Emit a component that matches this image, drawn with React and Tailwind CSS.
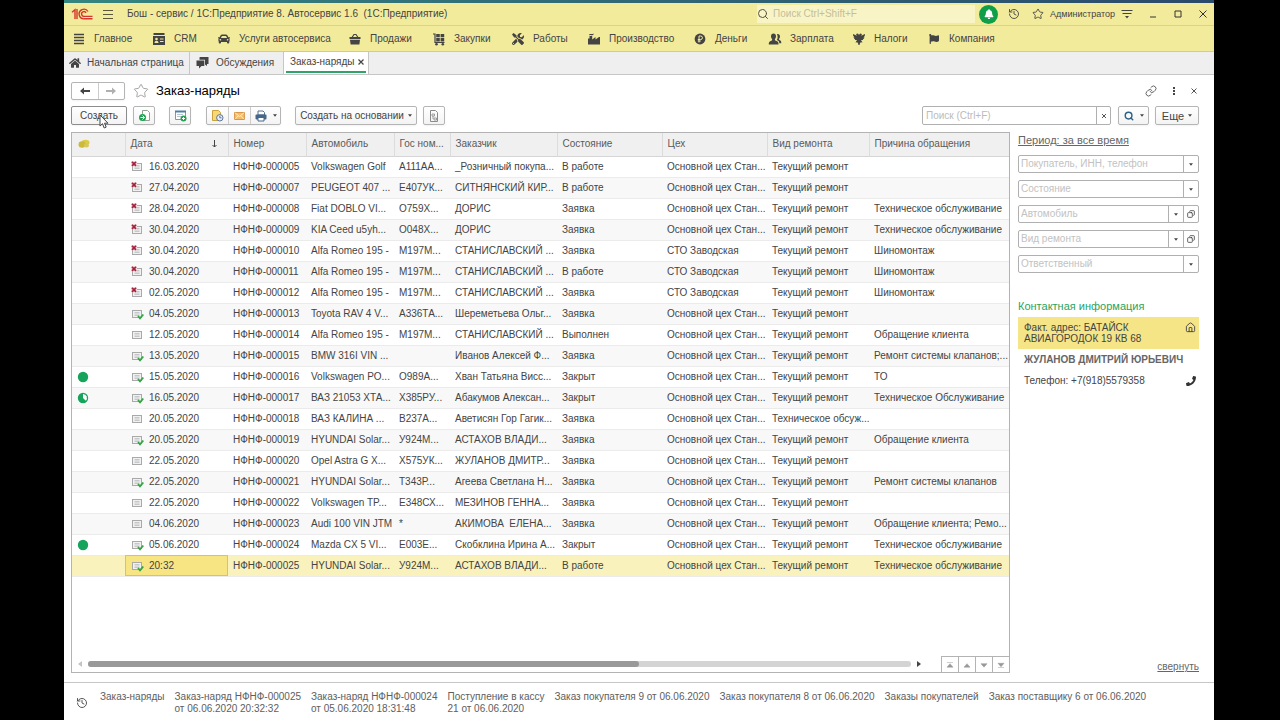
import {
  Copy,
  History,
  House,
  Link,
  Search,
  Star,
} from "lucide-react";
import { FaBell, FaCar, FaFlag, FaHome, FaPhone, FaTools } from "react-icons/fa";
import { clsx } from "clsx";

const glyph = "h-3.5 w-3.5 shrink-0";

function SectionsIcon() {
  return (
    <svg viewBox="0 0 14 14" className={glyph} stroke="currentColor" strokeWidth="1.4">
      <path d="M2 2.5h10M2 5.5h10M2 8.5h10M2 11.5h10" />
    </svg>
  );
}

function CrmIcon() {
  return (
    <svg viewBox="0 0 14 14" className={glyph} fill="currentColor">
      <path d="M1.5 1h11v2h-11zM1 4h12v9H1z" />
      <circle cx="4.5" cy="7" r="1.3" fill="#f3eb9c" />
      <path d="M2.5 11c0-3 4-3 4 0z" fill="#f3eb9c" />
      <path d="M8 7h3.5M8 9.5h3.5" stroke="#f3eb9c" strokeWidth="1.2" />
    </svg>
  );
}

function BasketIcon() {
  return (
    <svg viewBox="0 0 14 14" className={glyph} fill="currentColor">
      <path d="M4 5.5 6 2.5h2l2 3" fill="none" stroke="currentColor" strokeWidth="1.2" />
      <path d="M1.5 5h11v2h-11zM2 7.8h10l-.6 4.7H2.6z" />
    </svg>
  );
}

function TrolleyIcon() {
  return (
    <svg viewBox="0 0 14 14" className={glyph} fill="currentColor">
      <path d="M1 2h2v8.5h9.5" fill="none" stroke="currentColor" strokeWidth="1.2" />
      <path d="M4.2 2h3.6v3.3H4.2zM8.6 2h3.6v3.3H8.6zM4.2 6.1h3.6v3.3H4.2zM8.6 6.1h3.6v3.3H8.6z" />
      <circle cx="4.5" cy="12.2" r="1.3" />
      <circle cx="10.8" cy="12.2" r="1.3" />
    </svg>
  );
}

function FactoryIcon() {
  return (
    <svg viewBox="0 0 14 14" className={glyph} fill="currentColor">
      <path d="M1 12.5V6.5h1.5V4h2.7v3.4L8.5 5v2.4L12 5h1v7.5z" />
      <path d="M2 2.7C3 .8 4.5 3 6.5 1.5v1.2C5 4 3.5 2 2 3.4z" />
    </svg>
  );
}

function RubleIcon() {
  return (
    <svg viewBox="0 0 14 14" className={glyph}>
      <circle cx="7" cy="7" r="5.4" fill="currentColor" />
      <path d="M6 10.5V4h1.7a1.7 1.7 0 0 1 0 3.5H4.8M4.8 9h3" fill="none" stroke="#f3eb9c" />
    </svg>
  );
}

function PeopleIcon() {
  return (
    <svg viewBox="0 0 14 14" className={glyph} fill="currentColor">
      <path d="M5.5 1.5c1.6 0 2.5 1.1 2.5 2.8 0 1.2-.5 2.2-1.1 2.8v1.2l2.6 1.2c.8.4 1 1.3 1 3H.8c0-1.7.2-2.6 1-3l2.3-1.2V7.1C3.5 6.5 3 5.5 3 4.3 3 2.6 3.9 1.5 5.5 1.5z" />
      <path d="M9 2.2c1.7-.4 3 .6 3 2.3 0 1-.3 1.8-.9 2.3v1l1.3.8c.7.4.9 1.3.9 2.6h-2c-.1-1.5-.4-2.2-1.5-2.7l-1-.5c1-1.3 1.2-3.8.2-5.8z" />
    </svg>
  );
}

function EagleIcon() {
  return (
    <svg viewBox="0 0 14 14" className={glyph} fill="currentColor">
      <path d="M7 3 6 1.5 4 2l.8 1.7L1 2l.2 2 .8.3-.6.9 1 .5-.5 1 1.2.3-.3 1L5 8l-1.5 2.5 1.7-.3.8 1 .5 1.8h1l.5-1.8.8-1 1.7.3L9 8l2.2 0-.3-1 1.2-.3-.5-1 1-.5-.6-.9.8-.3L13 2 9.2 3.7 10 2 8 1.5z" />
    </svg>
  );
}

const sections = [
  { title: "Главное", icon: <SectionsIcon />, width: "w-[80px]" },
  { title: "CRM", icon: <CrmIcon />, width: "w-[65px]" },
  { title: "Услуги автосервиса", icon: <FaCar className="h-3.5 w-3.5 shrink-0 p-px" />, width: "w-[131px]" },
  { title: "Продажи", icon: <BasketIcon />, width: "w-[84px]" },
  { title: "Закупки", icon: <TrolleyIcon />, width: "w-[79px]" },
  { title: "Работы", icon: <FaTools className="h-3.5 w-3.5 shrink-0 p-px" />, width: "w-[76px]" },
  { title: "Производство", icon: <FactoryIcon />, width: "w-[106px]" },
  { title: "Деньги", icon: <RubleIcon />, width: "w-[75px]" },
  { title: "Зарплата", icon: <PeopleIcon />, width: "w-[84px]" },
  { title: "Налоги", icon: <EagleIcon />, width: "w-[75px]" },
  { title: "Компания", icon: <FaFlag className="h-3.5 w-3.5 shrink-0 p-0.5" />, width: "w-[80px]" },
];

const SHOP = "Основной цех Стан...";
const PLANT = "СТО Заводская";
const CURRENT = "Текущий ремонт";

// mark: deleted | posted | draft, paid: full | part
const orders = [
  { mark: "deleted", date: "16.03.2020", no: "000005", car: "Volkswagen Golf", plate: "А111АА...", client: "_Розничный покупа...", state: "В работе", shop: SHOP, kind: CURRENT, reason: "" },
  { mark: "deleted", date: "27.04.2020", no: "000007", car: "PEUGEOT 407 ...", plate: "Е407УК...", client: "СИТНЯНСКИЙ КИР...", state: "В работе", shop: SHOP, kind: CURRENT, reason: "" },
  { mark: "deleted", date: "28.04.2020", no: "000008", car: "Fiat DOBLO VI...", plate: "О759Х...", client: "ДОРИС", state: "Заявка", shop: SHOP, kind: CURRENT, reason: "Техническое обслуживание" },
  { mark: "deleted", date: "30.04.2020", no: "000009", car: "KIA Ceed u5yh...", plate: "О048Х...", client: "ДОРИС", state: "Заявка", shop: SHOP, kind: CURRENT, reason: "Техническое обслуживание" },
  { mark: "deleted", date: "30.04.2020", no: "000010", car: "Alfa Romeo 195 -", plate: "М197М...", client: "СТАНИСЛАВСКИЙ ...", state: "Заявка", shop: PLANT, kind: CURRENT, reason: "Шиномонтаж" },
  { mark: "deleted", date: "30.04.2020", no: "000011", car: "Alfa Romeo 195 -", plate: "М197М...", client: "СТАНИСЛАВСКИЙ ...", state: "В работе", shop: PLANT, kind: CURRENT, reason: "Шиномонтаж" },
  { mark: "deleted", date: "02.05.2020", no: "000012", car: "Alfa Romeo 195 -", plate: "М197М...", client: "СТАНИСЛАВСКИЙ ...", state: "Заявка", shop: PLANT, kind: CURRENT, reason: "Шиномонтаж" },
  { mark: "posted", date: "04.05.2020", no: "000013", car: "Toyota RAV 4 V...", plate: "А336ТА...", client: "Шереметьева Ольг...", state: "Заявка", shop: SHOP, kind: CURRENT, reason: "" },
  { mark: "draft", date: "12.05.2020", no: "000014", car: "Alfa Romeo 195 -", plate: "М197М...", client: "СТАНИСЛАВСКИЙ ...", state: "Выполнен", shop: SHOP, kind: CURRENT, reason: "Обращение клиента" },
  { mark: "posted", date: "13.05.2020", no: "000015", car: "BMW 316I VIN ...", plate: "", client: "Иванов Алексей Ф...", state: "Заявка", shop: SHOP, kind: CURRENT, reason: "Ремонт системы клапанов;..." },
  { paid: "full", mark: "posted", date: "15.05.2020", no: "000016", car: "Volkswagen PO...", plate: "О989А...", client: "Хван Татьяна Висс...", state: "Закрыт", shop: SHOP, kind: CURRENT, reason: "ТО" },
  { paid: "part", mark: "posted", date: "16.05.2020", no: "000017", car: "ВАЗ 21053 ХТА...", plate: "Х385РУ...", client: "Абакумов Алексан...", state: "Закрыт", shop: SHOP, kind: CURRENT, reason: "Техническое Обслуживание" },
  { mark: "draft", date: "20.05.2020", no: "000018", car: "ВАЗ КАЛИНА ...", plate: "В237А...", client: "Аветисян Гор Гагик...", state: "Заявка", shop: SHOP, kind: "Техническое обсуж...", reason: "" },
  { mark: "posted", date: "20.05.2020", no: "000019", car: "HYUNDAI Solar...", plate: "У924М...", client: "АСТАХОВ ВЛАДИ...", state: "Заявка", shop: SHOP, kind: CURRENT, reason: "Обращение клиента" },
  { mark: "draft", date: "22.05.2020", no: "000020", car: "Opel Astra G X...", plate: "Х575УК...", client: "ЖУЛАНОВ ДМИТР...", state: "Заявка", shop: SHOP, kind: CURRENT, reason: "" },
  { mark: "posted", date: "22.05.2020", no: "000021", car: "HYUNDAI Solar...", plate: "Т343Р...", client: "Агеева Светлана Н...", state: "Заявка", shop: SHOP, kind: CURRENT, reason: "Ремонт системы клапанов" },
  { mark: "draft", date: "22.05.2020", no: "000022", car: "Volkswagen TP...", plate: "Е348СХ...", client: "МЕЗИНОВ ГЕННА...", state: "Заявка", shop: SHOP, kind: CURRENT, reason: "" },
  { mark: "draft", date: "04.06.2020", no: "000023", car: "Audi 100 VIN JTM", plate: "*", client: "АКИМОВА  ЕЛЕНА...", state: "Заявка", shop: SHOP, kind: CURRENT, reason: "Обращение клиента; Ремо..." },
  { paid: "full", mark: "posted", date: "05.06.2020", no: "000024", car: "Mazda CX 5 VI...", plate: "Е003Е...", client: "Скобклина Ирина А...", state: "Закрыт", shop: SHOP, kind: CURRENT, reason: "Техническое обслуживание" },
  { selected: true, mark: "posted", date: "20:32", no: "000025", car: "HYUNDAI Solar...", plate: "У924М...", client: "АСТАХОВ ВЛАДИ...", state: "В работе", shop: SHOP, kind: CURRENT, reason: "Техническое обслуживание" },
];

const recent = [
  ["Заказ-наряды"],
  ["Заказ-наряд НФНФ-000025", "от 06.06.2020 20:32:32"],
  ["Заказ-наряд НФНФ-000024", "от 05.06.2020 18:31:48"],
  ["Поступление в кассу", "21 от 06.06.2020"],
  ["Заказ покупателя 9 от 06.06.2020"],
  ["Заказ покупателя 8 от 06.06.2020"],
  ["Заказы покупателей"],
  ["Заказ поставщику 6 от 06.06.2020"],
];

function Logo() {
  return (
    <svg viewBox="0 0 22 12" className="h-3 w-[22px] shrink-0" fill="none" stroke="#d5352b" strokeWidth="1.4">
      <path d="M1 4.2 4 1.8V11M6 11V1" />
      <path d="M17 3.5A4.8 4.8 0 1 0 13.5 10.8H21.5" />
      <path d="M15 4.8A2.4 2.4 0 1 0 13.5 8.4H21.5" />
    </svg>
  );
}

function Caret() {
  return (
    <svg viewBox="0 0 5 3" className="h-[3px] w-1 shrink-0" fill="#444">
      <path d="M0 0h5L2.5 3z" />
    </svg>
  );
}

function OrderMark({ mark }) {
  return (
    <svg viewBox="0 0 13 12" className="h-3 w-[13px] shrink-0" fill="none">
      <rect x="1.5" y="2.5" width="9" height="7" fill="#f1f1f1" stroke="#a9a9a9" />
      <path d="M3.5 4.5h5M3.5 6h5M3.5 7.5h5" stroke="#b9bec0" strokeWidth=".8" />
      {mark === "deleted" && (
        <>
          <path d="M0 0h6v5.5H0z" fill="#f6dfe2" />
          <path d="M1 .8 5 4.8M5 .8 1 4.8" stroke="#a3223f" strokeWidth="1.8" />
        </>
      )}
      {mark === "posted" && <path d="M7 8l2 2.3L12.3 6.5" stroke="#35a344" strokeWidth="1.8" />}
    </svg>
  );
}

function PaidMark({ paid }) {
  if (!paid) return null;
  return (
    <svg viewBox="0 0 12 12" className="h-3 w-3" role="img" aria-label="Оплата">
      <circle cx="6" cy="6" r="5.2" fill="#16a45c" />
      {paid === "part" && <path d="M6 6V2A4 4 0 0 1 8.8 8.8z" fill="#fff" />}
    </svg>
  );
}

function ToolButton({ className, children, ...rest }) {
  return (
    <button
      type="button"
      className={clsx(
        "flex h-[19px] shrink-0 items-center justify-center rounded-xs border bg-linear-to-b from-white to-[#f3f3f3] shadow-xs",
        className
      )}
      {...rest}
    >
      {children}
    </button>
  );
}

function TitleBar() {
  return (
    <div className="flex h-[23px] items-center border-b border-[#dcd38b] px-[7px]">
      <Logo />
      <button type="button" aria-label="Меню" className="ml-2.5">
        <svg viewBox="0 0 10 10" className="h-2.5 w-2.5" stroke="#5b573a">
          <path d="M0 1.5h10M0 5.5h10M0 9.5h10" />
        </svg>
      </button>
      <span className="ml-3.5 whitespace-pre">Бош - сервис / 1С:Предприятие 8. Автосервис 1.6  (1С:Предприятие)</span>
      <label className="ml-auto flex h-[18px] w-[218px] items-center gap-1 bg-[#f9f4c6]">
        <Search className="h-3 w-3 text-[#55523c]" />
        <input
          aria-label="Глобальный поиск"
          placeholder="Поиск Ctrl+Shift+F"
          className="min-w-0 flex-1 outline-none placeholder:text-[#c3bf9a]"
        />
      </label>
      <button type="button" aria-label="Оповещения" className="ml-1 flex h-[19px] w-[19px] items-center justify-center rounded-full bg-[#0f9f48]">
        <FaBell className="h-2.5 w-2.5 text-white" />
      </button>
      <button type="button" aria-label="История" className="ml-2.5">
        <History className="h-3 w-3" strokeWidth={1.8} />
      </button>
      <button type="button" aria-label="Избранное" className="ml-3">
        <Star className="h-3 w-3" strokeWidth={1.8} />
      </button>
      <button type="button" className="ml-1.5 text-[9px]">Администратор</button>
      <button type="button" aria-label="Настройки" className="ml-1.5">
        <svg viewBox="0 0 12 10" className="h-2.5 w-3" stroke="#444" fill="#444">
          <path d="M.5 1.5h11M1.5 4.5h9" />
          <path d="M4 7h4L6 9.5z" stroke="none" />
        </svg>
      </button>
      <div className="ml-4 flex gap-[17px]">
        <button type="button" aria-label="Свернуть окно">
          <svg viewBox="0 0 8 8" className="h-2 w-2" stroke="#333"><path d="M1 7h6" /></svg>
        </button>
        <button type="button" aria-label="Развернуть окно">
          <svg viewBox="0 0 8 8" className="h-2 w-2" stroke="#333" fill="none"><path d="M1 1h6v6H1z" /></svg>
        </button>
        <button type="button" aria-label="Закрыть окно">
          <svg viewBox="0 0 8 8" className="h-2 w-2" stroke="#333"><path d="M.5.5l7 7M7.5.5l-7 7" /></svg>
        </button>
      </div>
    </div>
  );
}

function SectionBar() {
  return (
    <nav className="flex h-[26px] items-center border-b border-[#d3cc91] pl-2">
      {sections.map((s) => (
        <a key={s.title} href="#" className={clsx("flex shrink-0 items-center gap-2 whitespace-nowrap", s.width)}>
          {s.icon}
          {s.title}
        </a>
      ))}
    </nav>
  );
}

function TabBar() {
  return (
    <div className="flex h-[23px] border-b border-[#c6c6c6] bg-[#efefef]" role="tablist">
      <button type="button" role="tab" className="flex w-[126px] items-center gap-1.5 border-r border-[#c6c6c6] pl-[5px] whitespace-nowrap">
        <FaHome className="h-3 w-3 text-[#444]" />
        Начальная страница
      </button>
      <button type="button" role="tab" className="flex w-[94px] items-center gap-[7px] border-r border-[#c6c6c6] pl-1.5 whitespace-nowrap">
        <svg viewBox="0 0 13 12" className="h-3 w-[13px] shrink-0" fill="#444">
          <path d="M4 0h8.5v7H11v2L9 7.5V2.8H3.5V.5z" />
          <path d="M.5 3.5h7.8V9H5.5L3 11.5V9H.5z" />
        </svg>
        Обсуждения
      </button>
      <div className="flex w-[85px] flex-col border-r border-[#c6c6c6] bg-white px-0.5 pb-px">
        <div className="flex flex-1 items-center justify-between border-b-2 border-[#2fa36b] pr-0.5 pl-1">
          <button type="button" role="tab" aria-selected="true" className="whitespace-nowrap">Заказ-наряды</button>
          <button type="button" aria-label="Закрыть вкладку">
            <svg viewBox="0 0 6 6" className="h-1.5 w-1.5" stroke="#444" strokeWidth="1.2"><path d="M.5.5l5 5M5.5.5l-5 5" /></svg>
          </button>
        </div>
      </div>
    </div>
  );
}

function FormHeader() {
  return (
    <div className="flex h-[31px] items-center pt-px">
      <div className="flex h-[18px] w-[54px] rounded-xs border border-[#b5b5b5] shadow-xs">
        <button type="button" aria-label="Назад" className="flex flex-1 items-center justify-center border-r border-[#ccc]">
          <svg viewBox="0 0 10 8" className="h-2 w-2.5" fill="#444"><path d="M0 4 4 .5V3h6v2H4v2.5z" /></svg>
        </button>
        <button type="button" aria-label="Вперед" className="flex flex-1 items-center justify-center">
          <svg viewBox="0 0 10 8" className="h-2 w-2.5" fill="#b0b0b0"><path d="M10 4 6 .5V3H0v2h6v2.5z" /></svg>
        </button>
      </div>
      <button type="button" aria-label="В избранное" className="ml-2">
        <Star className="h-4 w-4 text-[#a5a5a5]" strokeWidth={1.5} />
      </button>
      <h1 className="ml-[7px] text-[13px] text-black">Заказ-наряды</h1>
      <div className="ml-auto flex items-center gap-4 pr-0.5">
        <button type="button" aria-label="Ссылка"><Link className="h-3 w-3 text-[#555]" strokeWidth={1.8} /></button>
        <button type="button" aria-label="Действия">
          <svg viewBox="0 0 2 8" className="h-2 w-0.5" fill="#444"><path d="M0 0h2v2H0zM0 3h2v2H0zM0 6h2v2H0z" /></svg>
        </button>
        <button type="button" aria-label="Закрыть">
          <svg viewBox="0 0 6 6" className="h-1.5 w-1.5" stroke="#555"><path d="M.5.5l5 5M5.5.5l-5 5" /></svg>
        </button>
      </div>
    </div>
  );
}

function Toolbar() {
  return (
    <div className="flex items-center">
      <div className="relative">
        <ToolButton className="w-14 border-[#8c8c8c]">Создать</ToolButton>
        <svg viewBox="0 0 10 15" className="pointer-events-none absolute top-2 left-7 h-[15px] w-2.5">
          <path d="M1 1v11l2.5-2.3L5.2 14l2-.9-1.7-3.9H9z" fill="#fff" stroke="#444" />
        </svg>
      </div>
      <ToolButton className="ml-1.5 w-[22px] border-[#b5b5b5]" aria-label="Скопировать">
        <svg viewBox="0 0 13 13" className="h-[13px] w-[13px]" fill="none">
          <path d="M4.5 1.5h5l2 2v8h-7z" fill="#fff" stroke="#8fa394" />
          <circle cx="4.5" cy="8.5" r="3.5" fill="#20a350" />
          <path d="M2.5 8.5h4M4.5 6.5l2 2-2 2" stroke="#fff" />
        </svg>
      </ToolButton>
      <ToolButton className="ml-3.5 w-[22px] border-[#b5b5b5]" aria-label="Добавить в период">
        <svg viewBox="0 0 13 13" className="h-[13px] w-[13px]" fill="none">
          <path d="M1.5 2.5h10v8h-10z" fill="#fff" stroke="#7e98ae" />
          <path d="M1 2.5h11" stroke="#4e7ea5" strokeWidth="2" />
          <path d="M3 5.5h6M3 7.5h4" stroke="#b8c3cc" />
          <circle cx="9.5" cy="9.5" r="3" fill="#20a350" />
          <path d="M8 9.5h3M9.5 8v3" stroke="#fff" />
        </svg>
      </ToolButton>
      <div className="ml-[15px] flex h-[19px] w-[75px] rounded-xs border border-[#b5b5b5] bg-linear-to-b from-white to-[#f3f3f3] shadow-xs">
        <button type="button" aria-label="Отложить" className="flex w-[22px] items-center justify-center border-r border-[#ccc]">
          <svg viewBox="0 0 13 13" className="h-[13px] w-[13px]" fill="none">
            <path d="M1.5 1.5h6l2 2v8h-8z" fill="#f7d873" stroke="#c9a23c" />
            <circle cx="8.8" cy="8.8" r="3.2" fill="#e8eff8" stroke="#5c7299" />
            <path d="M8.8 6.8v2h1.7" stroke="#5c7299" />
          </svg>
        </button>
        <button type="button" aria-label="Отправить письмо" className="flex w-[22px] items-center justify-center border-r border-[#ccc]">
          <svg viewBox="0 0 12 9" className="h-2 w-[11px]" fill="none">
            <path d="M.5.5h11v8H.5z" fill="#f4bd6a" stroke="#d48a35" />
            <path d="M1 1l5 4 5-4M1 8l3.5-3.5M11 8 7.5 4.5" stroke="#fff1d8" />
          </svg>
        </button>
        <button type="button" aria-label="Печать" className="flex flex-1 items-center justify-center gap-1.5">
          <svg viewBox="0 0 12 12" className="h-3 w-3" fill="none">
            <path d="M3 1h5l1.5 1.5V5H3z" fill="#fff" stroke="#51708c" />
            <rect x=".5" y="4.5" width="11" height="5" rx="1" fill="#44678a" />
            <path d="M3 7.5h6v3.5H3z" fill="#fff" stroke="#44678a" />
          </svg>
          <Caret />
        </button>
      </div>
      <ToolButton className="ml-3.5 w-[122px] gap-1 border-[#b5b5b5] whitespace-nowrap">
        Создать на основании <Caret />
      </ToolButton>
      <ToolButton className="ml-1.5 w-[22px] border-[#b5b5b5]" aria-label="Связанные документы">
        <svg viewBox="0 0 10 12" className="h-3 w-2.5" fill="none" stroke="#8a8a8a">
          <path d="M1.5.5h5l2 2v9h-7z" />
          <path d="M3 4h2.5v2H3zM5 8h2.5v2H5zM4 6v3" strokeWidth=".8" />
        </svg>
      </ToolButton>
      <div className="ml-auto flex h-[19px] w-[189px] rounded-xs border border-[#b0b0b0]">
        <input aria-label="Поиск" placeholder="Поиск (Ctrl+F)" className="min-w-0 flex-1 px-[3px] outline-none placeholder:text-[#bbb]" />
        <button type="button" aria-label="Очистить" className="flex w-3.5 items-center justify-center border-l border-[#b0b0b0]">
          <svg viewBox="0 0 4 4" className="h-1 w-1" stroke="#555"><path d="M0 0l4 4M4 0 0 4" /></svg>
        </button>
      </div>
      <ToolButton className="ml-[7px] w-[31px] gap-1.5 border-[#b5b5b5]" aria-label="Найти">
        <Search className="h-2.5 w-2.5 text-[#2e6187]" strokeWidth={3.5} />
        <Caret />
      </ToolButton>
      <ToolButton className="ml-1.5 w-11 gap-1 border-[#b5b5b5] text-[11px]">
        Еще <Caret />
      </ToolButton>
    </div>
  );
}

function Th({ children }) {
  return (
    <th className="border-r border-[#dcdcdc] pl-[5px] text-left font-normal text-[#5a5a5a] last:border-r-0">
      {children}
    </th>
  );
}

function OrdersTable() {
  return (
    <div className="flex min-w-0 flex-1 flex-col border border-[#b3b3b3]">
      <div className="flex-1 overflow-hidden">
        <table className="w-full table-fixed border-collapse whitespace-pre">
          <colgroup>
            <col className="w-[53px]" />
            <col className="w-[103px]" />
            <col className="w-[78px]" />
            <col className="w-[88px]" />
            <col className="w-[56px]" />
            <col className="w-[107px]" />
            <col className="w-[105px]" />
            <col className="w-[105px]" />
            <col className="w-[102px]" />
            <col />
          </colgroup>
          <thead>
            <tr className="h-[23px] border-b border-[#d5d5d5] bg-[#f0f0f0]">
              <Th>
                <svg viewBox="0 0 12 10" className="ml-px h-2.5 w-3" role="img" aria-label="Оплата">
                  <ellipse cx="7.5" cy="3.5" rx="4" ry="2.8" fill="#dccb45" />
                  <ellipse cx="4" cy="5.5" rx="3.5" ry="3.3" fill="#cdb93a" />
                  <ellipse cx="8.5" cy="6.5" rx="2.5" ry="2" fill="#d8c75c" />
                </svg>
              </Th>
              <Th>
                <span className="flex items-center justify-between pr-[11px]">
                  Дата
                  <svg viewBox="0 0 5 8" className="h-2 w-[5px]" fill="none" stroke="#444"><path d="M2.5 0v7M.5 5l2 2 2-2" /></svg>
                </span>
              </Th>
              <Th>Номер</Th>
              <Th>Автомобиль</Th>
              <Th>Гос ном...</Th>
              <Th>Заказчик</Th>
              <Th>Состояние</Th>
              <Th>Цех</Th>
              <Th>Вид ремонта</Th>
              <Th>Причина обращения</Th>
            </tr>
          </thead>
          <tbody>
            {orders.map((o) => (
              <tr
                key={o.no}
                className={clsx(
                  "h-[21px] border-b border-[#ebebeb]",
                  o.selected ? "bg-[#faf2bd]" : "even:bg-[#f8f8f8]"
                )}
              >
                <td className="pl-[5px]"><PaidMark paid={o.paid} /></td>
                <td className={clsx("pl-1.5", o.selected && "bg-[#f7e583] outline-1 -outline-offset-1 outline-[#e2c540]")}>
                  <span className="flex items-center gap-[5px]">
                    <OrderMark mark={o.mark} />
                    {o.date}
                  </span>
                </td>
                <td className="pl-[5px]">НФНФ-{o.no}</td>
                <td className="pl-[5px]">{o.car}</td>
                <td className="pl-[5px]">{o.plate}</td>
                <td className="pl-[5px]">{o.client}</td>
                <td className="pl-[5px]">{o.state}</td>
                <td className="pl-[5px]">{o.shop}</td>
                <td className="pl-[5px]">{o.kind}</td>
                <td className="pl-[5px]">{o.reason}</td>
              </tr>
            ))}
          </tbody>
        </table>
      </div>
      <div className="flex h-4 items-center">
        <svg viewBox="0 0 4 6" className="ml-1.5 h-1.5 w-1" fill="#c4c4c4"><path d="M4 0v6L0 3z" /></svg>
        <div className="ml-1.5 h-1.5 flex-1 rounded-full bg-[#d4d4d4]">
          <div className="h-1.5 w-[67%] rounded-full bg-[#999]" />
        </div>
        <svg viewBox="0 0 4 6" className="mr-5 ml-1.5 h-1.5 w-1" fill="#444"><path d="M0 0v6l4-3z" /></svg>
        <div className="flex h-4 border-t border-[#b3b3b3]">
          {[
            ["В начало", "M1 .5h7M4.5 2 8 6H1z"],
            ["Вверх", "M4.5 2 8 6H1z"],
            ["Вниз", "M1 2h7L4.5 6z"],
            ["В конец", "M1 1.5h7L4.5 5.5zM1 6.5h7"],
          ].map(([name, d]) => (
            <button key={name} type="button" aria-label={name} className="flex w-[17px] items-center justify-center border-l border-[#b3b3b3]">
              <svg viewBox="0 0 9 7" className="h-1.5 w-2" fill="#999" stroke="#999" strokeWidth=".6"><path d={d} /></svg>
            </button>
          ))}
        </div>
      </div>
    </div>
  );
}

function FilterField({ name, open }) {
  return (
    <div className="flex h-[18px] rounded-xs border border-[#b0b0b0]">
      <input aria-label={name} placeholder={name} className="min-w-0 flex-1 px-0.5 outline-none placeholder:text-[#c2c2c2]" />
      <button type="button" aria-label={`Выбрать: ${name}`} className="flex w-[15px] items-center justify-center border-l border-[#b0b0b0]">
        <Caret />
      </button>
      {open && (
        <button type="button" aria-label={`Открыть: ${name}`} className="flex w-[15px] items-center justify-center border-l border-[#b0b0b0]">
          <Copy className="h-2 w-2 -scale-x-100" strokeWidth={2.5} />
        </button>
      )}
    </div>
  );
}

function SidePanel() {
  return (
    <aside className="flex w-[181px] shrink-0 flex-col">
      <a href="#" className="self-start text-[11px] leading-4 whitespace-nowrap text-[#666] underline">Период: за все время</a>
      <div className="mt-[7px] flex flex-col gap-[7px]">
        <FilterField name="Покупатель, ИНН, телефон" />
        <FilterField name="Состояние" />
        <FilterField name="Автомобиль" open />
        <FilterField name="Вид ремонта" open />
        <FilterField name="Ответственный" />
      </div>
      <h2 className="mt-[25px] text-[11px] leading-4 whitespace-nowrap text-[#2ba35c]">Контактная информация</h2>
      <div className="mt-[3px] flex h-8 items-center justify-between bg-[#f5e587] pr-[3px] pl-1.5">
        <p className="leading-[11px]">
          Факт. адрес: БАТАЙСК
          <br />
          АВИАГОРОДОК 19 КВ 68
        </p>
        <House className="mb-3 h-[11px] w-[11px]" />
      </div>
      <p className="mt-[5px] pl-1.5 leading-3 font-bold whitespace-nowrap text-[#666]">ЖУЛАНОВ ДМИТРИЙ ЮРЬЕВИЧ</p>
      <div className="mt-[9px] flex items-center justify-between pr-[3px] pl-1.5 leading-3">
        Телефон: +7(918)5579358
        <FaPhone className="h-2.5 w-2.5 text-[#333]" />
      </div>
      <a href="#" className="mt-auto self-end text-[#666] underline">свернуть</a>
    </aside>
  );
}

function RecentBar() {
  return (
    <footer className="flex min-h-[38px] items-start border-t border-[#c6c6c6] pt-2 pl-3 leading-3 text-[#5e5e5e]">
      <History className="mt-1.5 mr-3 h-3 w-3 text-[#444]" strokeWidth={1.8} />
      <div className="flex gap-2.5">
        {recent.map((lines) => (
          <a key={lines[0]} href="#" className="whitespace-nowrap">
            {lines.map((line) => (
              <span key={line} className="block">{line}</span>
            ))}
          </a>
        ))}
      </div>
    </footer>
  );
}

export default function App() {
  return (
    <div className="flex min-h-screen bg-black pr-[66px] pl-16 font-['Liberation_Sans',Arial,sans-serif] text-[10px] leading-3 text-[#444]">
      <div className="flex min-w-0 flex-1 flex-col bg-white">
        <div className="h-[3px] bg-linear-to-r from-[#35857f] to-[#2b4a6b]" />
        <header className="bg-[#f3eb9c]">
          <TitleBar />
          <SectionBar />
        </header>
        <TabBar />
        <main className="flex flex-1 flex-col pr-[15px] pb-[9px] pl-[7px]">
          <FormHeader />
          <Toolbar />
          <div className="mt-[7px] flex flex-1 gap-2">
            <OrdersTable />
            <SidePanel />
          </div>
        </main>
        <RecentBar />
      </div>
    </div>
  );
}
